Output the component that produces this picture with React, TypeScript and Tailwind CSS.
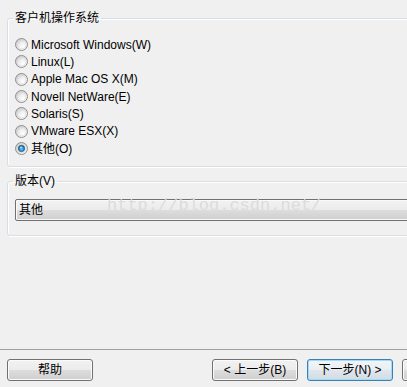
import React from "react";

const osOptions = [
  { label: "Microsoft Windows(W)", checked: false },
  { label: "Linux(L)", checked: false },
  { label: "Apple Mac OS X(M)", checked: false },
  { label: "Novell NetWare(E)", checked: false },
  { label: "Solaris(S)", checked: false },
  { label: "VMware ESX(X)", checked: false },
  { label: "其他(O)", checked: true },
];

function Radio({ checked, id }: { checked: boolean; id: string }) {
  return (
    <svg width="13" height="13" viewBox="0 0 13 13" className="shrink-0">
      <defs>
        <radialGradient id={`rg-${id}`} cx="0.65" cy="0.7" r="0.7">
          <stop offset="0" stopColor="#ffffff" />
          <stop offset="0.55" stopColor="#eeeeee" />
          <stop offset="1" stopColor="#c9c9c9" />
        </radialGradient>
        <radialGradient id={`dot-${id}`} cx="0.5" cy="0.6" r="0.6">
          <stop offset="0" stopColor="#5fc6f7" />
          <stop offset="0.6" stopColor="#2a86c8" />
          <stop offset="1" stopColor="#0e4a80" />
        </radialGradient>
      </defs>
      <circle cx="6.5" cy="6.5" r="6" fill={`url(#rg-${id})`} stroke="#8e8f8f" strokeWidth="1" />
      <circle cx="6.5" cy="6.5" r="4.6" fill="none" stroke="#d8d8d8" strokeWidth="0.8" />
      {checked && (
        <>
          <circle cx="6.5" cy="6.5" r="3.2" fill={`url(#dot-${id})`} stroke="#1b4f7e" strokeWidth="0.6" />
          <ellipse cx="6.1" cy="5.3" rx="1.4" ry="0.9" fill="#c9ecff" opacity="0.8" />
        </>
      )}
    </svg>
  );
}

function WinButton({ children, primary }: { children?: React.ReactNode; primary?: boolean }) {
  return (
    <button
      className={`w-[86px] h-[22px] shrink-0 rounded-[3px] border text-[12px] leading-none text-black ${
        primary
          ? "border-[#3c7fb1] bg-[linear-gradient(to_bottom,#f1f5f8_0%,#e9eef2_50%,#dfe6ec_50%,#d3dce3_100%)] shadow-[inset_0_0_0_1px_#9fdcf9]"
          : "border-[#707070] bg-[linear-gradient(to_bottom,#f2f2f2_0%,#ebebeb_50%,#dddddd_50%,#cfcfcf_100%)] shadow-[inset_0_0_0_1px_#fbfbfb]"
      }`}
    >
      {children}
    </button>
  );
}

export default function App() {
  return (
    <div
      className="relative w-[407px] h-[387px] overflow-hidden bg-[#f0f0f0] flex flex-col text-[12px] text-black"
      style={{ fontFamily: '"Liberation Sans", "Noto Sans CJK SC", sans-serif' }}
    >
      <div className="w-[460px] pl-[7px]">
        {/* Guest OS */}
        <fieldset className="mt-[10px] rounded-[3px] border border-[#d5dfe5] pl-[7px] pt-[10px] pb-[9px] shadow-[inset_1px_1px_0_#ffffff,1px_1px_0_#ffffff]">
          <legend className="ml-[-2px] px-[2px] leading-[16px]">客户机操作系统</legend>
          <div className="flex flex-col">
            {osOptions.map((o, i) => (
              <label key={o.label} className="flex items-center gap-[3px] h-[17.33px] leading-none">
                <Radio checked={o.checked} id={String(i)} />
                <span>{o.label}</span>
              </label>
            ))}
          </div>
        </fieldset>

        {/* Version */}
        <fieldset className="mt-[6px] rounded-[3px] border border-[#d5dfe5] pl-[7px] pt-[10px] pb-[14px] shadow-[inset_1px_1px_0_#ffffff,1px_1px_0_#ffffff]">
          <legend className="ml-[-2px] px-[2px] leading-[16px]">版本(V)</legend>
          <div className="h-[22px] rounded-[2px] border border-[#707070] bg-[linear-gradient(to_bottom,#f2f2f2_0%,#ebebeb_50%,#dddddd_50%,#cfcfcf_100%)] shadow-[inset_0_0_0_1px_#fafafa] flex items-center pl-[3px]">
            其他
          </div>
        </fieldset>
      </div>

      <div className="flex-1" />

      {/* Footer */}
      <div className="border-t border-[#a0a0a0] shadow-[inset_0_1px_0_#ffffff]" />
      <div className="flex items-center w-[500px] pl-[7px] pt-[9px] pb-[6px]">
        <WinButton>帮助</WinButton>
        <div className="flex gap-[9px] ml-[119px]">
          <WinButton>&lt; 上一步(B)</WinButton>
          <WinButton primary>下一步(N) &gt;</WinButton>
          <WinButton />
        </div>
      </div>

      {/* watermark */}
      <span
        className="absolute left-[107px] top-[196px] text-[17px] leading-[20px] text-[#dcdcdc] pointer-events-none"
        style={{ fontFamily: '"Liberation Mono", monospace' }}
      >
        http://blog.csdn.net/
      </span>
    </div>
  );
}
